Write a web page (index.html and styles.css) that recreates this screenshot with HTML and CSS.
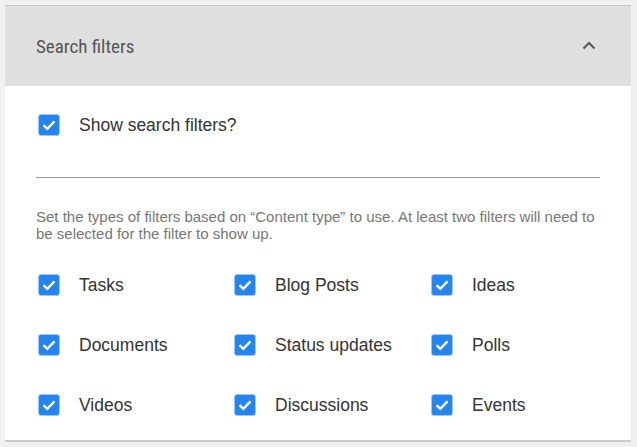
FILE: index.html
```html
<!DOCTYPE html>
<html lang="en">
<head>
    <meta charset="UTF-8">
    <meta name="viewport" content="width=device-width, initial-scale=1.0">
    <title>Search filters</title>
    <link rel="stylesheet" href="styles.css">
</head>
<body>
    <div class="panel">
        <div class="panel-header">
            <span class="panel-title">Search filters</span>
            <svg class="chevron" width="14" height="9" viewBox="0 0 14 9">
                <path d="M1.5 7.5 L7 2 L12.5 7.5" fill="none" stroke="#555" stroke-width="2"/>
            </svg>
        </div>
        <div class="panel-body">
            <label class="check">
                <span class="box"><svg width="20" height="20" viewBox="0 0 20 20"><path d="M4.5 10.2 L8.3 13.8 L15.5 6.3" fill="none" stroke="#fff" stroke-width="2.4"/></svg></span>
                <span>Show search filters?</span>
            </label>
            <hr class="divider">
            <p class="help">Set the types of filters based on “Content type” to use. At least two filters will need to be selected for the filter to show up.</p>
            <div class="filter-grid">
                <label class="check"><span class="box"><svg width="20" height="20" viewBox="0 0 20 20"><path d="M4.5 10.2 L8.3 13.8 L15.5 6.3" fill="none" stroke="#fff" stroke-width="2.4"/></svg></span><span>Tasks</span></label>
                <label class="check"><span class="box"><svg width="20" height="20" viewBox="0 0 20 20"><path d="M4.5 10.2 L8.3 13.8 L15.5 6.3" fill="none" stroke="#fff" stroke-width="2.4"/></svg></span><span>Blog Posts</span></label>
                <label class="check"><span class="box"><svg width="20" height="20" viewBox="0 0 20 20"><path d="M4.5 10.2 L8.3 13.8 L15.5 6.3" fill="none" stroke="#fff" stroke-width="2.4"/></svg></span><span>Ideas</span></label>
                <label class="check"><span class="box"><svg width="20" height="20" viewBox="0 0 20 20"><path d="M4.5 10.2 L8.3 13.8 L15.5 6.3" fill="none" stroke="#fff" stroke-width="2.4"/></svg></span><span>Documents</span></label>
                <label class="check"><span class="box"><svg width="20" height="20" viewBox="0 0 20 20"><path d="M4.5 10.2 L8.3 13.8 L15.5 6.3" fill="none" stroke="#fff" stroke-width="2.4"/></svg></span><span>Status updates</span></label>
                <label class="check"><span class="box"><svg width="20" height="20" viewBox="0 0 20 20"><path d="M4.5 10.2 L8.3 13.8 L15.5 6.3" fill="none" stroke="#fff" stroke-width="2.4"/></svg></span><span>Polls</span></label>
                <label class="check"><span class="box"><svg width="20" height="20" viewBox="0 0 20 20"><path d="M4.5 10.2 L8.3 13.8 L15.5 6.3" fill="none" stroke="#fff" stroke-width="2.4"/></svg></span><span>Videos</span></label>
                <label class="check"><span class="box"><svg width="20" height="20" viewBox="0 0 20 20"><path d="M4.5 10.2 L8.3 13.8 L15.5 6.3" fill="none" stroke="#fff" stroke-width="2.4"/></svg></span><span>Discussions</span></label>
                <label class="check"><span class="box"><svg width="20" height="20" viewBox="0 0 20 20"><path d="M4.5 10.2 L8.3 13.8 L15.5 6.3" fill="none" stroke="#fff" stroke-width="2.4"/></svg></span><span>Events</span></label>
            </div>
        </div>
    </div>
</body>
</html>
```

FILE: styles.css
```css
body {
    background-color: #f0f0f0;
    font-family: "Liberation Sans", Arial, sans-serif;
    margin: 0;
    padding: 5px 6px 0 5px;
}
.panel {
    border-top: 1px solid #c6c6c6;
    border-bottom: 2px solid #cacaca;
    background-color: #ffffff;
}
.panel-header {
    background-color: #dfdfdf;
    height: 80px;
    display: flex;
    align-items: center;
    justify-content: space-between;
    padding: 0 35px 0 31px;
}
.panel-title {
    font-family: "Liberation Sans Narrow", "Roboto Condensed", Roboto, sans-serif;
    font-size: 19px;
    color: #555555;
}
.chevron {
    margin-top: -2px;
}
.panel-body {
    padding: 28px 31px 24px 31px;
}
.check {
    display: flex;
    align-items: center;
    gap: 19px;
    font-size: 17.5px;
    color: #333333;
    height: 22px;
    padding-left: 2px;
}
.box {
    width: 20px;
    height: 20px;
    background-color: #2585ee;
    border: 1px solid #9fc8f6;
    border-radius: 3px;
    display: block;
}
.box svg {
    display: block;
}
.divider {
    border: none;
    border-top: 1px solid #9a9a9a;
    margin: 41px 0 0 0;
}
.help {
    font-size: 15px;
    color: #777777;
    line-height: 17px;
    margin: 30px 0 32px 0;
}
.filter-grid {
    display: grid;
    grid-template-columns: 196px 197px 1fr;
    row-gap: 38px;
}
```
